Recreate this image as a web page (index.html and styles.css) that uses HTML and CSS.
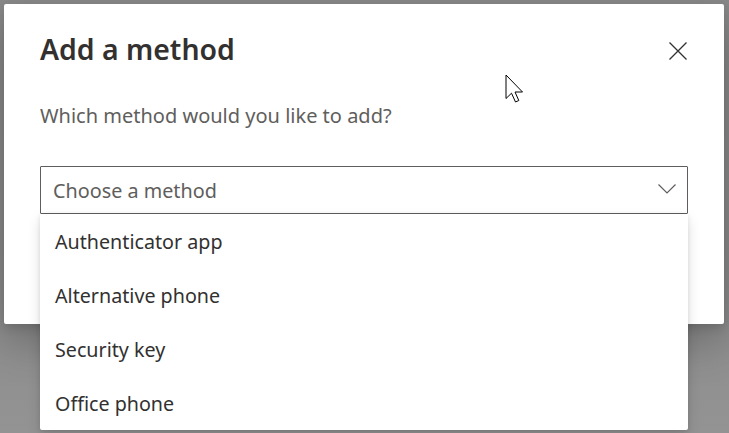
FILE: index.html
```html
<!DOCTYPE html>
<html lang="en">
<head>
<meta charset="utf-8">
<title>Add a method</title>
<link rel="stylesheet" href="styles.css">
</head>
<body>
<div class="overlay">
  <div class="dialog">
    <div class="header">
      <h1 class="title">Add a method</h1>
      <button class="close" aria-label="Close">
        <svg width="18" height="18" viewBox="0 0 18 18"><path d="M0.5 0.5 L17.5 17.5 M17.5 0.5 L0.5 17.5" stroke="#323130" stroke-width="1.3" fill="none"/></svg>
      </button>
    </div>
    <p class="label">Which method would you like to add?</p>
    <div class="select-wrap">
      <div class="select">
        <span class="placeholder">Choose a method</span>
        <svg class="chevron" width="18" height="10" viewBox="0 0 18 10"><path d="M0.5 0.5 L9 9 L17.5 0.5" stroke="#605e5c" stroke-width="1.2" fill="none"/></svg>
      </div>
      <ul class="menu">
        <li class="option">Authenticator app</li>
        <li class="option">Alternative phone</li>
        <li class="option">Security key</li>
        <li class="option">Office phone</li>
      </ul>
    </div>
  </div>
  <svg class="cursor" width="19" height="29" viewBox="0 0 19 29"><path d="M1 1 L1 24.5 L6.5 19.2 L10.5 28 L13.8 26.5 L10 18 L17.5 18 Z" fill="#fff" stroke="#000" stroke-width="1" stroke-linejoin="miter"/></svg>
</div>
</body>
</html>
```
FILE: styles.css
```css
* { box-sizing: border-box; }
html, body { margin: 0; padding: 0; }
body {
  width: 729px;
  height: 433px;
  overflow: hidden;
  background: #8e8e8e;
  font-family: "Noto Sans", "Open Sans", sans-serif;
}
.overlay {
  position: relative;
  width: 729px;
  height: 433px;
  padding: 4px;
  background: linear-gradient(180deg, #888 0%, #8a8a8a 60%, #939393 100%);
}
.dialog {
  position: relative;
  width: 720px;
  height: 320px;
  background: #fff;
  border-radius: 2px;
  padding: 27px 37px 0 36px;
  box-shadow: 0 20px 40px rgba(0,0,0,0.22), 0 4px 10px rgba(0,0,0,0.12);
}
.header {
  display: flex;
  justify-content: space-between;
  align-items: flex-start;
}
.title {
  margin: 0;
  font-size: 28.4px;
  line-height: 36px;
  font-weight: 600;
  color: #323130;
}
.close {
  margin: 11px 0 0 0;
  padding: 0;
  border: 0;
  background: transparent;
  width: 18px;
  height: 18px;
  display: block;
}
.close svg { display: block; }
.label {
  margin: 35px 0 0 0;
  font-size: 20px;
  line-height: 28px;
  color: #605e5c;
}
.select-wrap {
  position: relative;
  margin-top: 36px;
  width: 648px;
}
.select {
  height: 48px;
  border: 1px solid #605e5c;
  border-radius: 1px;
  display: flex;
  align-items: center;
  justify-content: space-between;
  padding: 0 11px 0 12px;
}
.placeholder {
  font-size: 19.8px;
  color: #605e5c;
}
.chevron { display: block; margin-top: -2px; }
.menu {
  position: absolute;
  left: 0;
  top: 48px;
  width: 648px;
  margin: 0;
  padding: 0;
  list-style: none;
  background: #fff;
  border-radius: 0 0 2px 2px;
  box-shadow: 0 6px 14px rgba(0,0,0,0.13), 0 1px 4px rgba(0,0,0,0.1);
}
.option {
  height: 54px;
  display: flex;
  align-items: center;
  padding-left: 15px;
  padding-top: 1px;
  font-size: 19.7px;
  color: #323130;
}
.cursor {
  position: absolute;
  left: 505px;
  top: 74px;
}
```
